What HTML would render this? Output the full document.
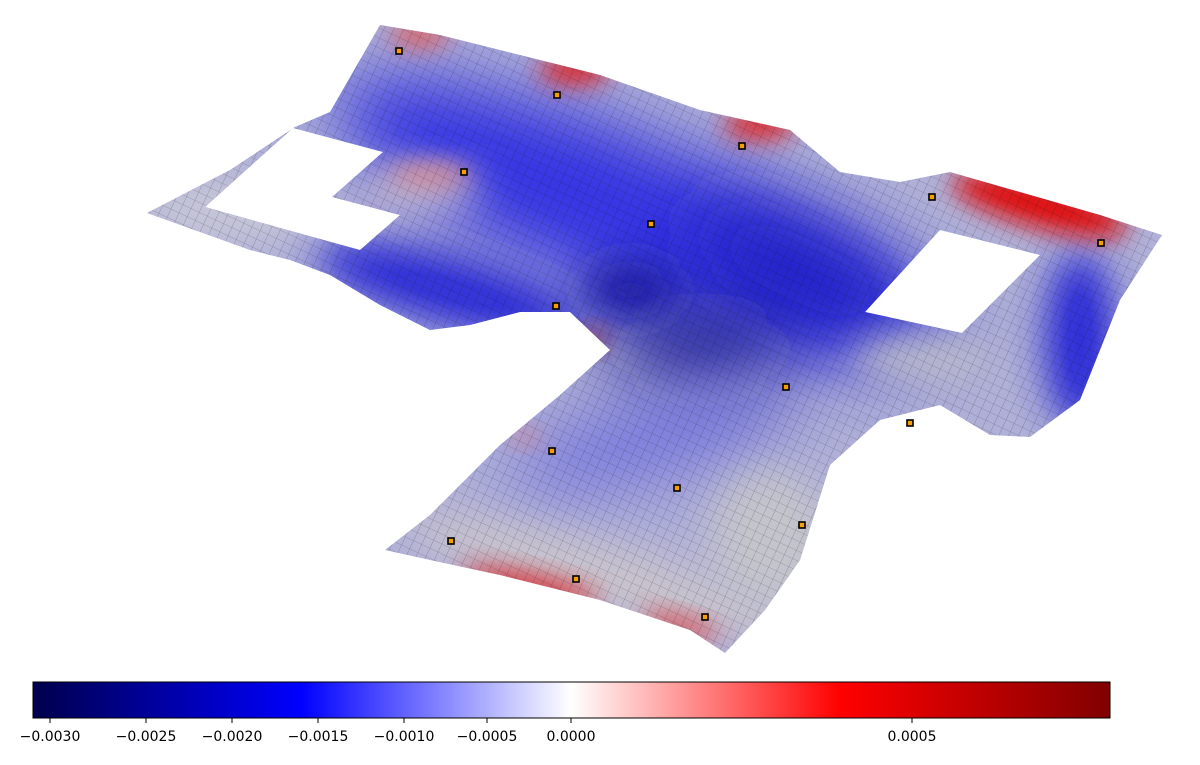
<!DOCTYPE html>
<html><head><meta charset="utf-8"><style>
html,body{margin:0;padding:0;background:#fff;width:1200px;height:765px;overflow:hidden}
svg{display:block}
text{font-family:"DejaVu Sans","Liberation Sans",sans-serif;font-size:14px;fill:#000}
</style></head><body>
<svg width="1200" height="765" viewBox="0 0 1200 765" xmlns="http://www.w3.org/2000/svg">
<defs>
<linearGradient id="cb" x1="0" x2="1" y1="0" y2="0">
<stop offset="0" stop-color="#00004d"/>
<stop offset="0.249" stop-color="#0000ff"/>
<stop offset="0.4995" stop-color="#ffffff"/>
<stop offset="0.75" stop-color="#ff0000"/>
<stop offset="1" stop-color="#800000"/>
</linearGradient>
<filter id="b20" x="-100%" y="-100%" width="300%" height="300%"><feGaussianBlur stdDeviation="20"/></filter>
<filter id="b35" x="-100%" y="-100%" width="300%" height="300%"><feGaussianBlur stdDeviation="35"/></filter>
<filter id="b12" x="-100%" y="-100%" width="300%" height="300%"><feGaussianBlur stdDeviation="12"/></filter>
<pattern id="grid" width="9" height="9" patternUnits="userSpaceOnUse" patternTransform="rotate(25)">
<path d="M0 0H9M0 0V9" stroke="#111" stroke-width="0.6" stroke-opacity="0.45" fill="none"/>
</pattern>
<clipPath id="surf"><path clip-rule="evenodd" fill-rule="evenodd" d="M147,213 L230,170 L295,127 L330,112 L380,25 L440,35 L540,60 L600,75 L700,110 L790,130 L840,172 L900,182 L950,172 L1100,215 L1162,235 L1120,300 L1080,400 L1030,437 L990,435 L940,405 L880,420 L830,465 L800,560 L765,610 L725,653 L690,630 L600,600 L500,575 L430,560 L385,550 L430,515 L500,445 L560,395 L610,350 L570,312 L520,312 L470,325 L430,330 L380,305 L330,275 L290,260 L250,250 L200,232 Z M205,207 L293,128 L383,152 L332,197 L400,215 L360,250 Z M865,312 L940,230 L1040,255 L962,333 Z"/></clipPath>
</defs>
<g clip-path="url(#surf)">
<rect x="0" y="0" width="1200" height="680" fill="#b0b0d8"/>
<ellipse cx="640" cy="220" rx="330" ry="80" transform="rotate(22 640 220)" fill="#3434e4" filter="url(#b35)"/>
<ellipse cx="450" cy="290" rx="140" ry="35" transform="rotate(15 450 290)" fill="#2a2ad8" filter="url(#b20)"/>
<ellipse cx="800" cy="270" rx="120" ry="45" transform="rotate(25 800 270)" fill="#2020c8" filter="url(#b35)"/>
<ellipse cx="700" cy="350" rx="90" ry="35" fill="#141490" filter="url(#b35)"/>
<ellipse cx="630" cy="290" rx="50" ry="30" fill="#1c1ca8" filter="url(#b20)"/>
<ellipse cx="1080" cy="340" rx="35" ry="90" fill="#2828d8" filter="url(#b20)"/>
<ellipse cx="650" cy="440" rx="150" ry="35" transform="rotate(-15 650 440)" fill="#7070e0" filter="url(#b35)"/>
<ellipse cx="230" cy="210" rx="90" ry="30" fill="#c8c8d8" filter="url(#b20)"/>
<ellipse cx="420" cy="190" rx="60" ry="18" fill="#d0c4cc" filter="url(#b20)"/>
<ellipse cx="920" cy="360" rx="70" ry="25" fill="#c0c0cc" filter="url(#b20)"/>
<ellipse cx="600" cy="575" rx="200" ry="30" transform="rotate(15 600 575)" fill="#cac4cc" filter="url(#b20)"/>
<ellipse cx="770" cy="540" rx="60" ry="70" fill="#c4c4cc" filter="url(#b20)"/>
<ellipse cx="420" cy="35" rx="30" ry="12" fill="#e06060" filter="url(#b12)"/>
<ellipse cx="575" cy="70" rx="35" ry="14" fill="#e02020" filter="url(#b12)"/>
<ellipse cx="760" cy="125" rx="35" ry="14" fill="#e02020" filter="url(#b12)"/>
<ellipse cx="1040" cy="205" rx="90" ry="22" transform="rotate(15 1040 205)" fill="#e01010" filter="url(#b12)"/>
<ellipse cx="430" cy="175" rx="40" ry="10" fill="#e09090" filter="url(#b12)"/>
<ellipse cx="530" cy="585" rx="70" ry="10" transform="rotate(12 530 585)" fill="#e02020" filter="url(#b12)"/>
<ellipse cx="680" cy="625" rx="40" ry="8" transform="rotate(15 680 625)" fill="#e04040" filter="url(#b12)"/>
<ellipse cx="525" cy="437" rx="15" ry="6" fill="#e08080" filter="url(#b12)"/>
<ellipse cx="590" cy="340" rx="15" ry="8" fill="#a02020" filter="url(#b12)"/>
<rect x="0" y="0" width="1200" height="680" fill="url(#grid)"/>
</g>
<g fill="#f5a000" stroke="#000" stroke-width="1.6">
<rect x="396" y="48" width="6" height="6"/><rect x="554" y="92" width="6" height="6"/>
<rect x="739" y="143" width="6" height="6"/><rect x="461" y="169" width="6" height="6"/>
<rect x="648" y="221" width="6" height="6"/><rect x="929" y="194" width="6" height="6"/>
<rect x="1098" y="240" width="6" height="6"/><rect x="553" y="303" width="6" height="6"/>
<rect x="783" y="384" width="6" height="6"/><rect x="907" y="420" width="6" height="6"/>
<rect x="549" y="448" width="6" height="6"/><rect x="674" y="485" width="6" height="6"/>
<rect x="799" y="522" width="6" height="6"/><rect x="448" y="538" width="6" height="6"/>
<rect x="573" y="576" width="6" height="6"/><rect x="702" y="614" width="6" height="6"/>
</g>
<rect x="33" y="682" width="1077" height="36" fill="url(#cb)" stroke="#000" stroke-width="1"/>
<g stroke="#000" stroke-width="1">
<line x1="50" y1="718" x2="50" y2="723"/><line x1="146" y1="718" x2="146" y2="723"/>
<line x1="232" y1="718" x2="232" y2="723"/><line x1="318" y1="718" x2="318" y2="723"/>
<line x1="404" y1="718" x2="404" y2="723"/><line x1="487" y1="718" x2="487" y2="723"/>
<line x1="571" y1="718" x2="571" y2="723"/><line x1="912" y1="718" x2="912" y2="723"/>
</g>
<g text-anchor="middle">
<text x="50" y="741">−0.0030</text><text x="146" y="741">−0.0025</text>
<text x="232" y="741">−0.0020</text><text x="318" y="741">−0.0015</text>
<text x="404" y="741">−0.0010</text><text x="487" y="741">−0.0005</text>
<text x="571" y="741">0.0000</text><text x="912" y="741">0.0005</text>
</g>
</svg>
</body></html>
